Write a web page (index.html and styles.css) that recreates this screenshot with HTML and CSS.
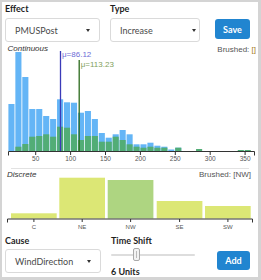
FILE: index.html
```html
<!DOCTYPE html>
<html>
<head>
<meta charset="utf-8">
<link rel="stylesheet" href="styles.css">
</head>
<body>
<div class="panel">
  <div class="row-top">
    <div class="field">
      <div class="label">Effect</div>
      <div class="select"><span>PMUSPost</span><i class="caret"></i></div>
    </div>
    <div class="field">
      <div class="label">Type</div>
      <div class="select tight"><span>Increase</span><i class="caret"></i></div>
    </div>
    <button class="btn save">Save</button>
  </div>

  <svg class="hist" width="251" height="124" viewBox="5 42 251 124">
    <text x="7.5" y="51" class="title">Continuous</text>
    <text x="256" y="52" class="brushed" text-anchor="end">Brushed: <tspan class="br">[]</tspan></text>
    <g class="blue">
      <rect x="8.4" y="104" width="6.1" height="47"/>
      <rect x="15.35" y="52" width="6.1" height="99"/>
      <rect x="22.3" y="77" width="6.1" height="74"/>
      <rect x="29.25" y="109" width="6.1" height="42"/>
      <rect x="36.2" y="109" width="6.1" height="42"/>
      <rect x="43.15" y="116" width="6.1" height="35"/>
      <rect x="50.1" y="119" width="6.1" height="32"/>
      <rect x="57.05" y="99.3" width="6.1" height="51.7"/>
      <rect x="64" y="102.3" width="6.1" height="48.7"/>
      <rect x="70.95" y="102.7" width="6.1" height="48.3"/>
      <rect x="77.9" y="112.7" width="6.1" height="38.3"/>
      <rect x="84.85" y="111" width="6.1" height="40"/>
      <rect x="91.8" y="119" width="6.1" height="32"/>
      <rect x="98.75" y="133" width="6.1" height="18"/>
      <rect x="105.7" y="137.7" width="6.1" height="13.3"/>
      <rect x="112.65" y="134.3" width="6.1" height="16.7"/>
      <rect x="119.6" y="130" width="6.1" height="21"/>
      <rect x="126.55" y="134.3" width="6.1" height="16.7"/>
      <rect x="133.5" y="144.3" width="6.1" height="6.7"/>
      <rect x="140.45" y="144.3" width="6.1" height="6.7"/>
      <rect x="147.4" y="142.7" width="6.1" height="8.3"/>
      <rect x="154.35" y="145.7" width="6.1" height="5.3"/>
      <rect x="161.3" y="146.7" width="6.1" height="4.3"/>
      <rect x="168.25" y="149.5" width="6.1" height="1.5"/>
      <rect x="175.2" y="147.7" width="6.1" height="3.3"/>
    </g>
    <g class="green">
      <rect x="15.35" y="146.7" width="6.1" height="4.3"/>
      <rect x="22.3" y="144" width="6.1" height="7"/>
      <rect x="29.25" y="136.7" width="6.1" height="14.3"/>
      <rect x="36.2" y="136" width="6.1" height="15"/>
      <rect x="43.15" y="134.3" width="6.1" height="16.7"/>
      <rect x="50.1" y="136.7" width="6.1" height="14.3"/>
      <rect x="57.05" y="126.7" width="6.1" height="24.3"/>
      <rect x="64" y="127.7" width="6.1" height="23.3"/>
      <rect x="70.95" y="134.3" width="6.1" height="16.7"/>
      <rect x="77.9" y="140" width="6.1" height="11"/>
      <rect x="84.85" y="136" width="6.1" height="15"/>
      <rect x="91.8" y="136" width="6.1" height="15"/>
      <rect x="98.75" y="141.7" width="6.1" height="9.3"/>
      <rect x="105.7" y="141.7" width="6.1" height="9.3"/>
      <rect x="112.65" y="136.7" width="6.1" height="14.3"/>
      <rect x="119.6" y="140" width="6.1" height="11"/>
      <rect x="126.55" y="144.3" width="6.1" height="6.7"/>
      <rect x="133.5" y="146.7" width="6.1" height="4.3"/>
      <rect x="140.45" y="147.7" width="6.1" height="3.3"/>
      <rect x="147.4" y="146.7" width="6.1" height="4.3"/>
      <rect x="154.35" y="147.7" width="6.1" height="3.3"/>
      <rect x="161.3" y="147.7" width="6.1" height="3.3"/>
      <rect x="175.2" y="147.7" width="6.1" height="3.3"/>
      <rect x="196.05" y="149" width="6.1" height="2"/>
      <rect x="237.75" y="150" width="6.1" height="1"/>
      <rect x="244.7" y="150" width="6.1" height="1"/>
    </g>
    <line x1="60.5" y1="51" x2="60.5" y2="151" class="mean-a"/>
    <text x="62" y="56.5" class="mlabel-a">μ=86.12</text>
    <line x1="79.2" y1="60" x2="79.2" y2="151" class="mean-b"/>
    <text x="80.7" y="66.5" class="mlabel-b">μ=113.23</text>
    <path class="axis" d="M8.5,155.5V151.5H254.5V155.5"/>
    <g class="axis">
      <line x1="35.7" y1="151.5" x2="35.7" y2="155"/>
      <line x1="70.6" y1="151.5" x2="70.6" y2="155"/>
      <line x1="105.5" y1="151.5" x2="105.5" y2="155"/>
      <line x1="140.4" y1="151.5" x2="140.4" y2="155"/>
      <line x1="175.3" y1="151.5" x2="175.3" y2="155"/>
      <line x1="210.2" y1="151.5" x2="210.2" y2="155"/>
      <line x1="245.1" y1="151.5" x2="245.1" y2="155"/>
    </g>
    <g class="tick" text-anchor="middle">
      <text x="35.7" y="161">50</text>
      <text x="70.6" y="161">100</text>
      <text x="105.5" y="161">150</text>
      <text x="140.4" y="161">200</text>
      <text x="175.3" y="161">250</text>
      <text x="210.2" y="161">300</text>
      <text x="245.1" y="161">350</text>
    </g>
  </svg>

  <hr class="sep">

  <svg class="disc" width="251" height="66" viewBox="5 169 251 66">
    <text x="7" y="176.5" class="title">Discrete</text>
    <text x="251" y="177" class="brushed" text-anchor="end">Brushed: [NW]</text>
    <rect class="lime" x="11" y="213.3" width="45.7" height="5.2"/>
    <rect class="lime" x="59.3" y="177.7" width="45.7" height="40.8"/>
    <rect class="sel" x="107.7" y="180" width="45.7" height="38.5"/>
    <rect class="lime" x="156.7" y="201" width="45.7" height="17.5"/>
    <rect class="lime" x="205" y="206" width="45.7" height="12.5"/>
    <path class="axis" d="M7.5,222.5V219H252.5V222.5"/>
    <g class="axis">
      <line x1="33.9" y1="219" x2="33.9" y2="222"/>
      <line x1="82.2" y1="219" x2="82.2" y2="222"/>
      <line x1="130.6" y1="219" x2="130.6" y2="222"/>
      <line x1="179.6" y1="219" x2="179.6" y2="222"/>
      <line x1="227.9" y1="219" x2="227.9" y2="222"/>
    </g>
    <g class="tick small" text-anchor="middle">
      <text x="33.9" y="228.5">C</text>
      <text x="82.2" y="228.5">NE</text>
      <text x="130.6" y="228.5">NW</text>
      <text x="179.6" y="228.5">SE</text>
      <text x="227.9" y="228.5">SW</text>
    </g>
  </svg>

  <div class="row-bottom">
    <div class="field">
      <div class="label">Cause</div>
      <div class="select"><span>WindDirection</span><i class="caret"></i></div>
    </div>
    <div class="field">
      <div class="label">Time Shift</div>
      <div class="slider"><div class="track"></div><div class="thumb"></div></div>
      <div class="units">6 Units</div>
    </div>
    <button class="btn add">Add</button>
  </div>
</div>
</body>
</html>
```

FILE: styles.css
```css
* { box-sizing: border-box; }
html, body { margin: 0; padding: 0; background: #fff; }
body { font-family: Lato, "Liberation Sans", sans-serif; color: #222; }

.panel {
  width: 261px;
  height: 280px;
  overflow: hidden;
  border-style: solid;
  border-color: #d4d4d4;
  border-width: 2px 3px 3px 2px;
  padding: 1px 2px 0 3px;
}

.row-top {
  display: grid;
  grid-template-columns: 95px 90px 35px;
  column-gap: 10px;
  height: 39px;
}
.row-top .save { margin-left: 5px; }

.label {
  font-size: 9px;
  font-weight: 700;
  line-height: 11px;
  height: 11px;
  margin-bottom: 4px;
  color: #1f1f1f;
}

.select {
  height: 24px;
  border: 1px solid #dadada;
  border-radius: 3px;
  display: flex;
  align-items: center;
  justify-content: space-between;
  padding: 0 9px 0 9px;
  font-size: 9px;
  color: #4a4a4a;
}
.select.tight { padding-right: 3px; }
.caret {
  width: 0;
  height: 0;
  border-left: 2.5px solid transparent;
  border-right: 2.5px solid transparent;
  border-top: 3px solid #333;
}

.btn {
  font-family: Lato, "Liberation Sans", sans-serif;
  background: #2185d0;
  color: #fff;
  border: none;
  border-radius: 3px;
  font-weight: 700;
  font-size: 9px;
  padding: 0;
  cursor: pointer;
}
.save { width: 35px; height: 20px; margin-top: 16px; }

.hist, .disc { display: block; }
.title { font-family: "Liberation Sans", sans-serif; font-style: italic; font-size: 8px; fill: #333; }
.brushed { font-family: "Liberation Sans", sans-serif; font-size: 8px; fill: #555; }
.br { fill: #a67c1a; }
.blue rect { fill: #64b5f6; }
.green rect { fill: #52ad76; }
.mean-a { stroke: #3a3ab8; stroke-width: 1.3; }
.mean-b { stroke: #2b6a1c; stroke-width: 1.3; }
.mlabel-a { font-family: "Liberation Sans", sans-serif; font-size: 8px; fill: #6c6cd6; }
.mlabel-b { font-family: "Liberation Sans", sans-serif; font-size: 8px; fill: #7f9f5c; }
.axis, .axis line { stroke: #333; stroke-width: 1; fill: none; }
.tick text { font-family: "Liberation Sans", sans-serif; font-size: 6.5px; fill: #555; }
.tick.small text { font-size: 6px; }
.lime { fill: #dce775; }
.sel { fill: #aed581; }

.sep {
  border: none;
  border-top: 1px solid #e2e2e2;
  height: 0;
  margin: 2px 7px 0 6px;
}

.row-bottom {
  display: grid;
  grid-template-columns: 96px 84px 33px;
  column-gap: 10px;
}
.row-bottom .add { margin-left: 12px; }
.row-bottom .label { margin-bottom: 3px; }

.slider {
  position: relative;
  height: 20px;
  margin-top: -3px;
}
.track {
  position: absolute;
  left: 0;
  right: 0;
  top: 8px;
  height: 2px;
  background: #ddd;
  border-radius: 1px;
}
.thumb {
  position: absolute;
  left: 22px;
  top: 2px;
  width: 7px;
  height: 13px;
  background: #f3f3f3;
  border: 1px solid #aaa;
  border-radius: 2px;
}
.thumb::after {
  content: "";
  position: absolute;
  left: 2px;
  top: 2px;
  width: 1px;
  height: 7px;
  background: #bbb;
}
.units {
  font-size: 9px;
  font-weight: 700;
  line-height: 11px;
  color: #1f1f1f;
}
.add { width: 33px; height: 19px; margin-top: 16px; }
```
